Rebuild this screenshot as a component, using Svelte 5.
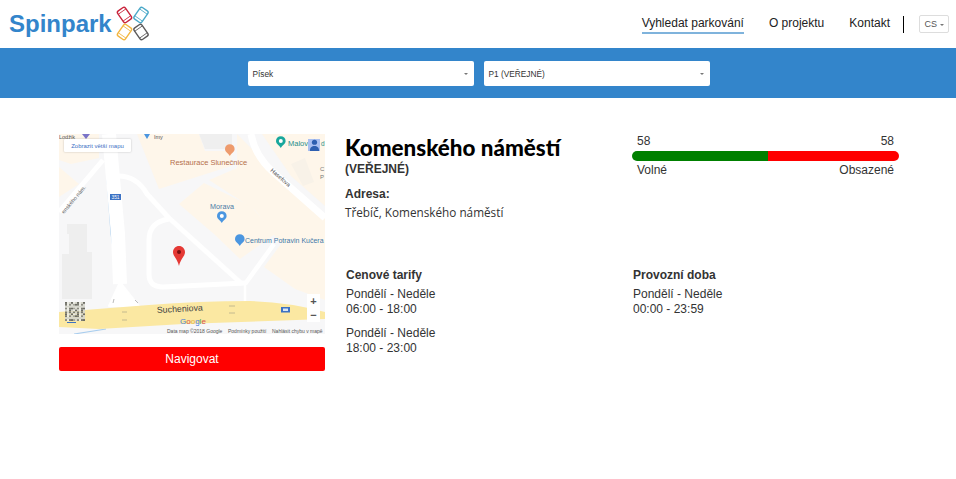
<script lang="ts">
  const navItems = [
    { label: "Vyhledat parkování", active: true },
    { label: "O projektu", active: false },
    { label: "Kontakt", active: false },
  ];
  const selects = ["Písek", "P1 (VEŘEJNÉ)"];
  const free = 58;
  const taken = 58;
  const freeShare = 51;
  const tariffs = [
    { days: "Pondělí - Neděle", time: "06:00 - 18:00" },
    { days: "Pondělí - Neděle", time: "18:00 - 23:00" },
  ];
  const logoParts = [
    { x: 124.5, y: 15, angle: -35, color: "#c9233b" },
    { x: 141, y: 15, angle: 35, color: "#4aa8c8" },
    { x: 124.5, y: 32, angle: 35, color: "#f3b63f" },
    { x: 141, y: 32, angle: -35, color: "#5c5a5a" },
  ];
  // speckle for the satellite thumbnail
  const shades = ["#6e6e66", "#a5a59a", "#d6d6cc", "#8c8c82", "#ecece4", "#7c7c72"];
  const thumbCells = [];
  for (let row = 0; row < 10; row++) {
    for (let col = 0; col < 10; col++) {
      thumbCells.push({ x: 6 + col * 2, y: 168 + row * 1.9, fill: shades[(col * col * 3 + row * row * 5 + col * row * 7 + col) % 6] });
    }
  }
</script>

<header class="topbar">
  <div class="brand">
    <span class="brand-name">Spinpark</span>
    <svg class="brand-logo" width="44" height="40" viewBox="112 4 44 40" aria-hidden="true">
      {#each logoParts as p}
        <g transform="translate({p.x} {p.y}) rotate({p.angle})" fill="none" stroke={p.color} stroke-width="1.4">
          <rect x="-4.7" y="-7" width="9.4" height="14" rx="2" />
          <path d="M-4.7 -4.2H4.7M-4.7 4.2H4.7" stroke-width=".8" />
        </g>
      {/each}
    </svg>
  </div>
  <nav class="nav">
    {#each navItems as item}
      <a href="#top" class="nav-link" class:active={item.active}>{item.label}</a>
    {/each}
    <span class="nav-sep"></span>
    <button class="lang">CS <i class="caret"></i></button>
  </nav>
</header>

<section class="filters">
  {#each selects as s}
    <div class="select">
      <span>{s}</span>
      <i class="caret"></i>
    </div>
  {/each}
</section>

<main class="content">
  <div class="map-col">
    <div class="map">
      <svg width="266" height="200" viewBox="0 0 266 200" aria-hidden="true">
        <rect width="266" height="200" fill="#f7f7f8" />
        <!-- buildings -->
        <g fill="#fef6ea">
          <path d="M0 0H40V24L12 30L0 26Z" />
          <path d="M0 33L20 50L0 63Z" />
          <path d="M78 0H140L146 17H173L172 32L100 55Z" />
          <path d="M120 70L145 49L192 72L216 100L181 125L155 100Z" />
          <path d="M178 0L214 36L240 60L266 84V166L236 155L205 133L222 110L196 76L150 46L178 34Z" />
          <path d="M203 0H266V72L232 42Z" />
        </g>
        <path d="M140 0H173V15H146Z" fill="#efefef" />
        <path d="M8 90H28V100H8ZM10 100H28V118H33V165H3V120H10Z" fill="#eeeeee" />
        <path d="M232 30L246 24L255 48L244 52Z" fill="#f8f2e8" />
        <!-- water -->
        <path d="M47 30L50 73L52 100L58 143L57 150" fill="none" stroke="#a8cdee" stroke-width="1" />
        <path d="M15 200L47 195" fill="none" stroke="#a8cdee" stroke-width="1.2" />
        <!-- streets -->
        <g fill="none" stroke="#fff" stroke-linejoin="round">
          <path d="M50 0L59 100L61 150" stroke-width="14" />
          <path d="M50 172L61 148L80 172Z" fill="#fff" stroke-width="2" />
          <path d="M44 26L0 78" stroke-width="5" />
          <path d="M59 42Q78 42 88 60L110 84L183 150" stroke-width="5" />
          <path d="M110 85Q90 88 90 106V140Q90 153 104 153L186 149" stroke-width="5" />
          <path d="M192 0Q196 22 214 38L266 84" stroke-width="7" />
          <path d="M186 150L215 110" stroke-width="4.500" />
          <path d="M186 150V168" stroke-width="2.500" />
        </g>
        <path d="M0 178L90 171Q140 167 191 167Q230 168 266 178V185L124 190L40 195L0 193Z" fill="#fbe8a2" />

        <g font-family="'Liberation Sans', sans-serif">
          <text x="111" y="31" font-size="7.500" fill="#b5704c">Restaurace Slunečnice</text>
          <text x="151" y="75" font-size="7.200" fill="#4b7aa6">Morava</text>
          <text x="186" y="109" font-size="7" fill="#3f78a8">Centrum Potravin Kučera</text>
          <text x="229" y="12" font-size="7.500" fill="#1f8f8a">Malov</text>
          <text x="262" y="12" font-size="6.500" fill="#1f8f8a">d</text>
          <text x="261" y="37" font-size="6" fill="#777">C</text>
          <text x="261" y="45" font-size="6" fill="#777">P</text>
          <text font-size="5.800" fill="#555" transform="translate(211 37) rotate(41)">Hasefova</text>
          <text font-size="5.500" fill="#666" transform="translate(5 80) rotate(-50)">enského nám.</text>
          <text x="98" y="179" font-size="8.800" fill="#444" transform="rotate(-3 98 179)">Sucheniova</text>
          <text x="121" y="190" font-size="8"><tspan fill="#4a80d8">G</tspan><tspan fill="#d6524a">o</tspan><tspan fill="#e3b63c">o</tspan><tspan fill="#4a80d8">g</tspan><tspan fill="#4aa65a">l</tspan><tspan fill="#d6524a">e</tspan></text>
          <text x="0" y="5" font-size="5.500" fill="#555">Lodžik</text>
          <text x="95" y="5" font-size="5.500" fill="#555">Imy</text>
          <text x="108" y="199" font-size="5" fill="#555">Data map ©2018 Google</text>
          <text x="169" y="199" font-size="5" fill="#555">Podmínky použití</text>
          <text x="213" y="199" font-size="5" fill="#555">Nahlásit chybu v mapě</text>
        </g>

        <!-- poi pins -->
        <path d="M166 15a4.800 4.800 0 1 1 9.600 0c0 3-3.200 4-4.800 7c-1.600-3-4.800-4-4.800-7Z" fill="#ee9b6d" />
        <path d="M217 7a4.800 4.800 0 1 1 9.600 0c0 3-3.200 4-4.800 7c-1.600-3-4.800-4-4.800-7Z" fill="#18a79c" />
        <circle cx="221.800" cy="7" r="2" fill="#fff" />
        <path d="M158 82a4.800 4.800 0 1 1 9.600 0c0 3-3.200 4-4.800 7c-1.600-3-4.800-4-4.800-7Z" fill="#4b96e0" />
        <circle cx="162.800" cy="82" r="2" fill="#fff" />
        <path d="M176 105a4.800 4.800 0 1 1 9.600 0c0 3-3.200 4-4.800 7c-1.600-3-4.800-4-4.800-7Z" fill="#4b96e0" />
        <path d="M23 0h8l-4 5Z" fill="#7a74c8" />
        <path d="M85 0h6l-3 5Z" fill="#4b96e0" />

        <!-- route shields -->
        <rect x="51" y="60" width="11" height="6" fill="#3c72c4" />
        <text x="56.500" y="65" font-size="4.800" fill="#fff" text-anchor="middle" font-family="'Liberation Sans', sans-serif">351</text>
        <rect x="222" y="173" width="9" height="5.500" fill="#3c72c4" />
        <rect x="224" y="174.500" width="5" height="2.500" fill="#d8e4f4" />

        <!-- small arrows on the road -->
        <g stroke="#b8ae8a" stroke-width=".8" fill="none">
          <path d="M63 178h5M63 186h5M170 172h6M170 179h6" />
        </g>
        <path d="M55 165l-1 4M76 166l3 3" stroke="#bbb" stroke-width="1" fill="none" />

        <!-- marker -->
        <path d="M120 112c-3.300 0-6 2.700-6 6c0 4.500 4.300 6.500 6 14c1.700-7.500 6-9.500 6-14c0-3.300-2.700-6-6-6Z" fill="#e53935" />
        <circle cx="120" cy="118" r="2" fill="#7a1010" />

        <!-- satellite thumbnail -->
        <g>
          {#each thumbCells as c}
            <rect x={c.x} y={c.y} width="2" height="1.900" fill={c.fill} />
          {/each}
          <rect x="8" y="188" width="9" height="1" fill="#3c72c4" />
        </g>
      </svg>
      <button class="map-bigger">Zobrazit větší mapu</button>
      <span class="map-person">
        <svg width="11" height="12" viewBox="0 0 11 13" aria-hidden="true">
          <circle cx="5.500" cy="3.500" r="2.800" fill="#2d5fb0" />
          <path d="M0.500 13c0-4 2-5.500 5-5.500s5 1.500 5 5.500Z" fill="#2d5fb0" />
        </svg>
      </span>
      <div class="map-zoom"><span>+</span><span>−</span></div>
    </div>
    <button class="navigate">Navigovat</button>
  </div>

  <div class="details">
    <div class="top-row">
      <div class="place">
        <h1>Komenského náměstí</h1>
        <p class="kind">(VEŘEJNÉ)</p>
        <p class="addr-label">Adresa:</p>
        <p class="addr">Třebíč, Komenského náměstí</p>
      </div>
      <div class="capacity">
        <div class="cap-row nums"><span>{free}</span><span>{taken}</span></div>
        <div class="bar">
          <span class="bar-free" style="width: {freeShare}%"></span>
          <span class="bar-taken"></span>
        </div>
        <div class="cap-row"><span>Volné</span><span>Obsazené</span></div>
      </div>
    </div>

    <div class="bottom-row">
      <div class="tariffs">
        <h2>Cenové tarify</h2>
        {#each tariffs as t}
          <p class="slot">{t.days}<br />{t.time}</p>
        {/each}
      </div>
      <div class="hours">
        <h2>Provozní doba</h2>
        <p class="slot">Pondělí - Neděle<br />00:00 - 23:59</p>
      </div>
    </div>
  </div>
</main>

<style>
  :global(body) {
    margin: 0;
    background: #fff;
    font-family: "Liberation Sans", Arial, sans-serif;
    color: #222;
  }

  .topbar {
    height: 48px;
    display: flex;
    justify-content: space-between;
    align-items: center;
    padding: 0 7px 0 9px;
  }

  .brand {
    display: flex;
    align-items: center;
  }

  .brand-name {
    font-size: 24px;
    font-weight: 700;
    color: #3385cb;
  }

  .nav {
    display: flex;
    align-items: center;
    font-size: 12px;
  }

  .nav-link {
    color: #222;
    text-decoration: none;
    margin-right: 25px;
    padding: 2px 0;
    border-bottom: 2px solid transparent;
  }

  .nav-link:nth-child(3) {
    margin-right: 13px;
  }

  .nav-link.active {
    border-bottom-color: #7fb3dc;
  }

  .nav-sep {
    width: 1px;
    height: 17px;
    background: #000;
    margin-right: 15px;
  }

  .lang {
    width: 30px;
    height: 18px;
    padding: 0;
    background: #fff;
    border: 1px solid #ddd;
    border-radius: 2px;
    font: 9px "Liberation Sans", sans-serif;
    color: #555;
  }

  .caret {
    display: inline-block;
    width: 0;
    height: 0;
    border-left: 2px solid transparent;
    border-right: 2px solid transparent;
    border-top: 2px solid #777;
    vertical-align: middle;
  }

  .filters {
    height: 50px;
    background: #3385cb;
    display: flex;
    justify-content: center;
    align-items: center;
    gap: 10px;
    padding-left: 1px;
    padding-top: 1px;
    box-sizing: border-box;
  }

  .select {
    width: 226px;
    height: 25px;
    background: #fff;
    border-radius: 2px;
    display: flex;
    justify-content: space-between;
    align-items: center;
    padding: 0 6px 0 5px;
    box-sizing: border-box;
    font-size: 8.300px;
    color: #333;
  }

  .content {
    display: flex;
    padding: 36px 0 0 59px;
  }

  .map-col {
    width: 266px;
    margin-right: 20px;
  }

  .map {
    position: relative;
    height: 200px;
    overflow: hidden;
  }

  .map svg {
    display: block;
  }

  .map-bigger {
    position: absolute;
    left: 5px;
    top: 5px;
    width: 67px;
    height: 13px;
    padding: 0;
    background: #fff;
    border: 0;
    border-radius: 1px;
    box-shadow: 0 0 2px rgba(0, 0, 0, 0.25);
    font: 6px "Liberation Sans", sans-serif;
    color: #3b6fc4;
  }

  .map-person {
    position: absolute;
    left: 249px;
    top: 5px;
    width: 12px;
    height: 12px;
    background: #a9bff0;
    display: flex;
    justify-content: center;
  }

  .map-zoom {
    position: absolute;
    right: 5px;
    top: 160px;
    width: 13px;
    height: 28px;
    background: #fff;
    display: flex;
    flex-direction: column;
    font-size: 11px;
    font-weight: 700;
    color: #555;
    text-align: center;
    line-height: 14px;
  }

  .navigate {
    display: block;
    width: 100%;
    height: 24px;
    margin-top: 13px;
    padding: 0;
    background: #f00;
    border: 0;
    border-radius: 2px;
    color: #fff;
    font: 12px "Liberation Sans", sans-serif;
  }

  .details {
    width: 555px;
  }

  .top-row,
  .bottom-row {
    display: grid;
    grid-template-columns: 287px 267px;
  }

  .top-row {
    height: 134px;
  }

  .bottom-row {
    padding-left: 1px;
  }

  h1 {
    margin: 0;
    font: 900 22.400px/28px Lato, sans-serif;
    color: #000;
  }

  .kind {
    margin: 0 0 11px;
    font-size: 12px;
    line-height: 14px;
    font-weight: 700;
    color: #333;
  }

  .addr-label {
    margin: 0 0 3px;
    font-size: 12px;
    line-height: 14px;
    font-weight: 700;
    color: #333;
  }

  .addr {
    margin: 0;
    font: 11.750px/16px "Open Sans", sans-serif;
    color: #333;
  }

  .capacity {
    font-size: 12px;
    color: #333;
  }

  .cap-row {
    display: flex;
    justify-content: space-between;
    padding: 0 5px;
    line-height: 14px;
  }

  .bar {
    display: flex;
    height: 10px;
    margin: 3px 0 2px;
    border-radius: 5px;
    overflow: hidden;
  }

  .bar-free {
    background: #008000;
  }

  .bar-taken {
    flex: 1;
    background: #f00;
  }

  h2 {
    margin: 0 0 5px;
    font-size: 12px;
    line-height: 14px;
    font-weight: 700;
    color: #333;
  }

  .slot {
    margin: 0 0 9px;
    font-size: 12px;
    line-height: 15px;
    color: #333;
  }
</style>
